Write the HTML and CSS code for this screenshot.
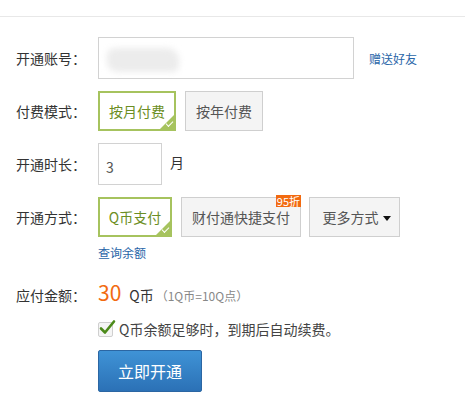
FILE: index.html
```html
<!DOCTYPE html>
<html lang="zh-CN">
<head>
    <meta charset="UTF-8">
    <meta name="viewport" content="width=device-width, initial-scale=1.0">
    <title>开通服务</title>
    <link rel="stylesheet" href="styles.css">
</head>
<body>
    <div class="container">
        <!-- 开通账号 -->
        <div class="row row-account">
            <span class="label">开通账号：</span>
            <div class="account-box"><span class="blur"></span></div>
            <a class="link gift" href="#">赠送好友</a>
        </div>

        <!-- 付费模式 -->
        <div class="row row-mode">
            <span class="label">付费模式：</span>
            <div class="opts">
                <button class="opt mode on">按月付费</button>
                <button class="opt mode">按年付费</button>
            </div>
        </div>

        <!-- 开通时长 -->
        <div class="row row-duration">
            <span class="label">开通时长：</span>
            <input class="num" type="text" value="3">
            <span class="unit">月</span>
        </div>

        <!-- 开通方式 -->
        <div class="row row-pay">
            <span class="label">开通方式：</span>
            <div class="opts pay-opts">
                <button class="opt qb on">Q币支付</button>
                <button class="opt tenpay">财付通快捷支付<span class="badge">95折</span></button>
                <button class="opt more">更多方式<i class="caret"></i></button>
            </div>
        </div>
        <div class="sub">
            <a class="link balance" href="#">查询余额</a>
        </div>

        <!-- 应付金额 -->
        <div class="row row-amount">
            <span class="label">应付金额：</span>
            <span class="price">30</span>
            <span class="currency">Q币</span>
            <span class="rate">（1Q币=10Q点）</span>
        </div>

        <div class="sub auto">
            <span class="check">
                <svg width="18" height="17" viewBox="0 0 18 17">
                    <path d="M3 9.5 L7 13.5 L16 2.5" fill="none" stroke="#4c8a1a" stroke-width="2.6" stroke-linecap="round" stroke-linejoin="round"/>
                </svg>
            </span>
            <span class="auto-text">Q币余额足够时，到期后自动续费。</span>
        </div>

        <div class="sub">
            <button class="submit">立即开通</button>
        </div>
    </div>
</body>
</html>
```

FILE: styles.css
```css
* {
    margin: 0;
    padding: 0;
    box-sizing: border-box;
}
body {
    font-family: "Noto Sans CJK SC", "Noto Sans", sans-serif;
    font-size: 14px;
    color: #333;
    background: #fff;
}
.container {
    margin-top: 16px;
    border-top: 1px solid #e8e8e8;
    padding-top: 20px;
}
.row {
    display: flex;
    align-items: center;
    line-height: 20px;
}
.label {
    width: 98px;
    padding-left: 16px;
    color: #333;
    white-space: nowrap;
}
.link {
    color: #2a66a8;
    font-size: 12px;
    text-decoration: none;
}
.account-box {
    position: relative;
    width: 256px;
    height: 42px;
    border: 1px solid #d2d2d2;
    background: #fff;
}
.blur {
    position: absolute;
    left: 8px;
    top: 10px;
    width: 72px;
    height: 24px;
    background: #ececec;
    border-radius: 8px 12px 6px 10px;
    filter: blur(3px);
}
.gift {
    margin-left: 15px;
    margin-top: 2px;
}
.row-mode {
    margin-top: 12px;
}
.opts {
    display: flex;
}
.opt {
    position: relative;
    height: 40px;
    font-family: inherit;
    font-size: 14px;
    color: #555;
    background: #f4f4f4;
    border: 1px solid #cfcfcf;
    cursor: pointer;
}
.opt.on {
    color: #6b8e23;
    background: #fff;
    border: 2px solid #a6c35e;
}
.opt.on::after {
    content: "";
    position: absolute;
    right: 0;
    bottom: 0;
    width: 0;
    height: 0;
    border-style: solid;
    border-width: 0 0 14px 14px;
    border-color: transparent transparent #a6c35e transparent;
}
.opt.on::before {
    content: "";
    position: absolute;
    right: 1px;
    bottom: 4px;
    width: 6px;
    height: 3px;
    border-left: 1.5px solid #fff;
    border-bottom: 1.5px solid #fff;
    transform: rotate(-45deg);
    z-index: 1;
}
.mode {
    width: 78px;
}
.mode + .mode {
    margin-left: 9px;
}
.row-duration {
    margin-top: 12px;
}
.num {
    width: 64px;
    height: 42px;
    padding: 6px 7px 0;
    border: 1px solid #d2d2d2;
    font-family: inherit;
    font-size: 14px;
    color: #555;
    outline: none;
}
.unit {
    margin-left: 8px;
    margin-top: -4px;
}
.row-pay {
    margin-top: 12px;
}
.qb {
    width: 74px;
}
.tenpay {
    width: 120px;
    margin-left: 9px;
}
.more {
    width: 91px;
    margin-left: 8px;
    padding-left: 4px;
}
.badge {
    position: absolute;
    top: -3px;
    right: -1px;
    height: 12px;
    padding: 0 1px;
    background: #f26a10;
    color: #fff;
    font-size: 11px;
    line-height: 12px;
}
.caret {
    display: inline-block;
    width: 0;
    height: 0;
    margin-left: 4px;
    vertical-align: 2px;
    border-left: 4px solid transparent;
    border-right: 4px solid transparent;
    border-top: 5px solid #111;
}
.sub {
    padding-left: 98px;
    line-height: 16px;
}
.balance {
    display: inline-block;
    margin-top: 8px;
}
.row-amount {
    margin-top: 17px;
    align-items: baseline;
}
.price {
    color: #f26a10;
    font-size: 21px;
    line-height: 28px;
}
.currency {
    margin-left: 8px;
    color: #333;
}
.rate {
    margin-left: 2px;
    color: #888;
    font-size: 12px;
}
.auto {
    display: flex;
    align-items: center;
    margin-top: 15px;
}
.check {
    position: relative;
    width: 15px;
    height: 15px;
    border: 1px solid #cfcfcf;
    border-radius: 2px;
    background: #f5f5f5;
}
.check svg {
    position: absolute;
    left: -1px;
    top: -4px;
}
.auto-text {
    margin-left: 6px;
    color: #444;
}
.submit {
    margin-top: 13px;
    width: 104px;
    height: 42px;
    font-family: inherit;
    font-size: 16px;
    color: #fff;
    background: linear-gradient(#3f93d6, #2b71b6);
    border: 1px solid #2b66a3;
    border-radius: 2px;
    cursor: pointer;
}
```
